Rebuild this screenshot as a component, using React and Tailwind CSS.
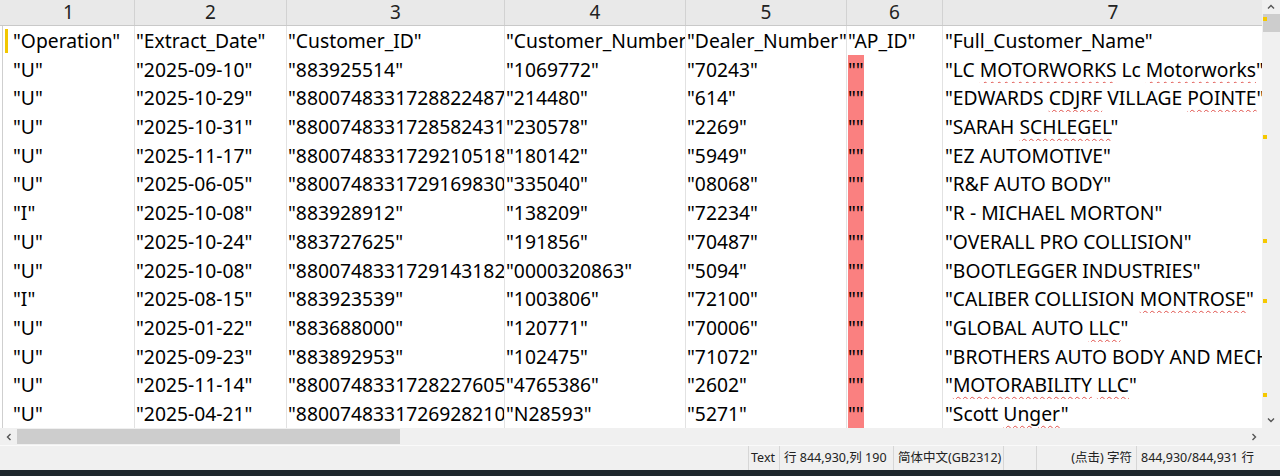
import React from 'react'

const cols = [132, 152, 218, 181, 161, 96, 341]

// ~word marks a word the spell checker flags
const rows = [
  ['"Operation"', '"Extract_Date"', '"Customer_ID"', '"Customer_Number"', '"Dealer_Number"', '"AP_ID"', '"Full_Customer_Name"'],
  ['"U"', '"2025-09-10"', '"883925514"', '"1069772"', '"70243"', '""', '"LC ~MOTORWORKS Lc ~Motorworks"'],
  ['"U"', '"2025-10-29"', '"8800748331728822487"', '"214480"', '"614"', '""', '"EDWARDS ~CDJRF VILLAGE ~POINTE"'],
  ['"U"', '"2025-10-31"', '"8800748331728582431"', '"230578"', '"2269"', '""', '"SARAH ~SCHLEGEL"'],
  ['"U"', '"2025-11-17"', '"8800748331729210518"', '"180142"', '"5949"', '""', '"EZ AUTOMOTIVE"'],
  ['"U"', '"2025-06-05"', '"8800748331729169830"', '"335040"', '"08068"', '""', '"R&F AUTO BODY"'],
  ['"I"', '"2025-10-08"', '"883928912"', '"138209"', '"72234"', '""', '"R - MICHAEL MORTON"'],
  ['"U"', '"2025-10-24"', '"883727625"', '"191856"', '"70487"', '""', '"OVERALL PRO COLLISION"'],
  ['"U"', '"2025-10-08"', '"8800748331729143182"', '"0000320863"', '"5094"', '""', '"BOOTLEGGER INDUSTRIES"'],
  ['"I"', '"2025-08-15"', '"883923539"', '"1003806"', '"72100"', '""', '"CALIBER COLLISION ~MONTROSE"'],
  ['"U"', '"2025-01-22"', '"883688000"', '"120771"', '"70006"', '""', '"GLOBAL AUTO ~LLC"'],
  ['"U"', '"2025-09-23"', '"883892953"', '"102475"', '"71072"', '""', '"BROTHERS AUTO BODY AND MECHANICAL"'],
  ['"U"', '"2025-11-14"', '"8800748331728227605"', '"4765386"', '"2602"', '""', '"~MOTORABILITY ~LLC"'],
  ['"U"', '"2025-04-21"', '"8800748331726928210"', '"N28593"', '"5271"', '""', '"Scott ~Unger"'],
]

const marks = [17, 135, 239, 299, 393]

function Text({ value }) {
  const parts = value.split(' ')
  return parts.map((p, i) => {
    const sep = i < parts.length - 1 ? ' ' : ''
    if (p.includes('~')) {
      const [pre, rest] = p.split('~')
      const word = rest.replace(/"$/, '')
      const post = rest.endsWith('"') ? '"' : ''
      return (
        <React.Fragment key={i}>
          {pre}
          <span className="underline decoration-wavy decoration-[#e0504a] decoration-1 underline-offset-[4px]">{word}</span>
          {post}{sep}
        </React.Fragment>
      )
    }
    return <React.Fragment key={i}>{p}{sep}</React.Fragment>
  })
}

function Chevron({ d }) {
  return (
    <svg width="10" height="10" viewBox="0 0 10 10" fill="none" stroke="#555" strokeWidth="1.4">
      <path d={d} />
    </svg>
  )
}

export default function App() {
  return (
    <div className="w-[1280px] h-[476px] flex flex-col bg-white overflow-hidden text-black" style={{ fontFamily: '"Noto Sans", "Noto Sans CJK SC", sans-serif' }}>
      <div className="h-[428px] flex">
        <div className="flex-1 overflow-hidden">
          {/* column numbers */}
          <div className="h-[26px] flex bg-[#e9e9e9] border-b border-[#c9c9c9] pl-[3px]">
            {cols.map((w, i) => (
              <div key={i} style={{ width: w }} className="shrink-0 border-r border-[#d2d2d2] text-center text-[19px] leading-[25px] text-[#222]">
                {i + 1}
              </div>
            ))}
          </div>
          <div className="relative">
            <div className="absolute left-[5px] top-[3px] w-[3px] h-[24px] bg-[#f2c700]" />
            {rows.map((r, ri) => (
              <div key={ri} className="h-[28.7px] flex ml-[2px] border-l border-[#cfcfcf]">
                {r.map((v, ci) => (
                  <div
                    key={ci}
                    style={{ width: cols[ci] }}
                    className={`shrink-0 flex border-r border-[#e2e2e2] overflow-hidden whitespace-nowrap text-[19.3px] ${ci === 0 ? 'pl-[10px]' : ci === 6 ? 'pl-[2px]' : 'pl-[1px]'}`}
                  >
                    {ci === 5 && ri > 0 ? (
                      <span className="h-full pt-[2px] leading-[26.7px] bg-[#fa8080]">""</span>
                    ) : (
                      <span className="pt-[2px] leading-[26.7px]"><Text value={v} /></span>
                    )}
                  </div>
                ))}
              </div>
            ))}
          </div>
        </div>
        {/* vertical scrollbar */}
        <div className="relative w-[18px] bg-[#f0f0f0] flex flex-col items-center">
          <div className="h-[14px] flex items-center justify-center"><Chevron d="M2 6.5 L5 3.5 L8 6.5" /></div>
          <div className="w-[17px] h-[18px] bg-[#cdcdcd]" />
          <div className="flex-1" />
          <div className="h-[16px] flex items-center justify-center"><Chevron d="M2 3.5 L5 6.5 L8 3.5" /></div>
          {marks.map(y => (
            <div key={y} style={{ top: y }} className="absolute left-[1px] w-[4px] h-[4px] bg-[#f5c800]" />
          ))}
        </div>
      </div>
      {/* horizontal scrollbar */}
      <div className="h-[17px] flex bg-[#f0f0f0]">
        <div className="w-[17px] flex items-center justify-center"><Chevron d="M6.5 2 L3.5 5 L6.5 8" /></div>
        <div className="w-[383px] my-[1px] bg-[#cdcdcd]" />
        <div className="flex-1" />
        <div className="w-[17px] flex items-center justify-center"><Chevron d="M3.5 2 L6.5 5 L3.5 8" /></div>
        <div className="w-[18px]" />
      </div>
      {/* status bar */}
      <div className="h-[25px] flex bg-[#f0f0f0] border-t border-[#fafafa] text-[12.5px] leading-[24px] text-[#222] whitespace-nowrap">
        <div className="flex-1" />
        <div className="w-[31px] border-l border-[#d6d6d6] pl-[2px]">Text</div>
        <div className="w-[114px] border-l border-[#d6d6d6] pl-[4px]">行 844,930,列 190</div>
        <div className="w-[110px] border-l border-[#d6d6d6] pl-[4px]">简体中文(GB2312)</div>
        <div className="w-[33px] border-l border-[#d6d6d6]" />
        <div className="w-[100px] border-l border-[#d6d6d6] pr-[4px] text-right">(点击) 字符</div>
        <div className="w-[126px] border-l border-[#d6d6d6] pl-[4px]">844,930/844,931 行</div>
        <div className="w-[18px]" />
      </div>
      <div className="flex-1 bg-[#1e272c]" />
    </div>
  )
}
